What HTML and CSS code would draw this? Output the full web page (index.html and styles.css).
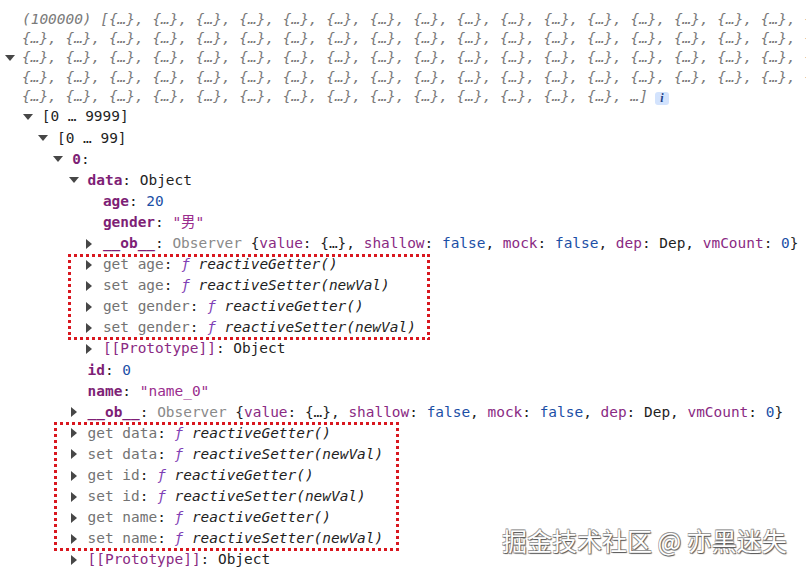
FILE: index.html
```html
<!DOCTYPE html>
<html lang="zh">
<head>
<meta charset="utf-8">
<title>Console</title>
<link rel="stylesheet" href="styles.css">
</head>
<body>
<div class="console">
  <div class="preview-row">
    <span class="tg down"></span>
    <div class="preview">
      <div class="pl">(100000) [{…}, {…}, {…}, {…}, {…}, {…}, {…}, {…}, {…}, {…}, {…}, {…}, {…}, {…}, {…}, {…}, {…}, {…},</div>
      <div class="pl">{…}, {…}, {…}, {…}, {…}, {…}, {…}, {…}, {…}, {…}, {…}, {…}, {…}, {…}, {…}, {…}, {…}, {…}, {…}, {…},</div>
      <div class="pl">{…}, {…}, {…}, {…}, {…}, {…}, {…}, {…}, {…}, {…}, {…}, {…}, {…}, {…}, {…}, {…}, {…}, {…}, {…}, {…},</div>
      <div class="pl">{…}, {…}, {…}, {…}, {…}, {…}, {…}, {…}, {…}, {…}, {…}, {…}, {…}, {…}, {…}, {…}, {…}, {…}, {…}, {…},</div>
      <div class="pl">{…}, {…}, {…}, {…}, {…}, {…}, {…}, {…}, {…}, {…}, {…}, {…}, {…}, {…}, …]<span class="info">i</span></div>
    </div>
  </div>

  <div class="tree">
    <div class="row"><span class="tg down"></span><span class="v">[0 … 9999]</span></div>
    <div class="kids">
      <div class="row"><span class="tg down"></span><span class="v">[0 … 99]</span></div>
      <div class="kids">
        <div class="row"><span class="tg down"></span><span class="v"><b class="k">0</b>:</span></div>
        <div class="kids">
          <div class="row"><span class="tg down"></span><span class="v"><b class="k">data</b>: Object</span></div>
          <div class="kids">
            <div class="row"><span class="tg"></span><span class="v"><b class="k">age</b>: <span class="num">20</span></span></div>
            <div class="row"><span class="tg"></span><span class="v"><b class="k">gender</b>: <span class="str">"男"</span></span></div>
            <div class="row"><span class="tg right"></span><span class="v"><b class="k">__ob__</b>: <span class="cls">Observer</span> {<span class="p">value</span>: {…}, <span class="p">shallow</span>: <span class="num">false</span>, <span class="p">mock</span>: <span class="num">false</span>, <span class="p">dep</span>: Dep, <span class="p">vmCount</span>: <span class="num">0</span>}</span></div>
            <div class="boxed box-a">
              <div class="row"><span class="tg right"></span><span class="v"><span class="acc">get age</span>: <i class="f">ƒ</i> <i>reactiveGetter()</i></span></div>
              <div class="row"><span class="tg right"></span><span class="v"><span class="acc">set age</span>: <i class="f">ƒ</i> <i>reactiveSetter(newVal)</i></span></div>
              <div class="row"><span class="tg right"></span><span class="v"><span class="acc">get gender</span>: <i class="f">ƒ</i> <i>reactiveGetter()</i></span></div>
              <div class="row"><span class="tg right"></span><span class="v"><span class="acc">set gender</span>: <i class="f">ƒ</i> <i>reactiveSetter(newVal)</i></span></div>
            </div>
            <div class="row"><span class="tg right"></span><span class="v"><span class="p">[[Prototype]]</span>: Object</span></div>
          </div>
          <div class="row"><span class="tg"></span><span class="v"><b class="k">id</b>: <span class="num">0</span></span></div>
          <div class="row"><span class="tg"></span><span class="v"><b class="k">name</b>: <span class="str">"name_0"</span></span></div>
          <div class="row"><span class="tg right"></span><span class="v"><b class="k">__ob__</b>: <span class="cls">Observer</span> {<span class="p">value</span>: {…}, <span class="p">shallow</span>: <span class="num">false</span>, <span class="p">mock</span>: <span class="num">false</span>, <span class="p">dep</span>: Dep, <span class="p">vmCount</span>: <span class="num">0</span>}</span></div>
          <div class="boxed box-b">
            <div class="row"><span class="tg right"></span><span class="v"><span class="acc">get data</span>: <i class="f">ƒ</i> <i>reactiveGetter()</i></span></div>
            <div class="row"><span class="tg right"></span><span class="v"><span class="acc">set data</span>: <i class="f">ƒ</i> <i>reactiveSetter(newVal)</i></span></div>
            <div class="row"><span class="tg right"></span><span class="v"><span class="acc">get id</span>: <i class="f">ƒ</i> <i>reactiveGetter()</i></span></div>
            <div class="row"><span class="tg right"></span><span class="v"><span class="acc">set id</span>: <i class="f">ƒ</i> <i>reactiveSetter(newVal)</i></span></div>
            <div class="row"><span class="tg right"></span><span class="v"><span class="acc">get name</span>: <i class="f">ƒ</i> <i>reactiveGetter()</i></span></div>
            <div class="row"><span class="tg right"></span><span class="v"><span class="acc">set name</span>: <i class="f">ƒ</i> <i>reactiveSetter(newVal)</i></span></div>
          </div>
          <div class="row"><span class="tg right"></span><span class="v"><span class="p">[[Prototype]]</span>: Object</span></div>
        </div>
      </div>
    </div>
  </div>
</div>
<div class="watermark">掘金技术社区 @ 亦黑迷失</div>
</body>
</html>
```
FILE: styles.css
```css
html, body {
  margin: 0;
  padding: 0;
  background: #ffffff;
  overflow: hidden;
}
body {
  width: 806px;
  height: 572px;
  position: relative;
  font-family: "DejaVu Sans Mono", "Liberation Mono", "Noto Sans CJK SC", monospace;
  font-size: 14.45px;
  color: #1f1f1f;
}
.console {
  padding-top: 10px;
}
.preview-row {
  display: flex;
  align-items: center;
  padding-left: 5px;
}
.preview-row .tg {
  width: 10px;
  margin-right: 7px;
}
.preview {
  flex: 1;
  overflow: hidden;
}
.pl {
  line-height: 19.2px;
  height: 19.2px;
  white-space: pre;
  font-style: italic;
  color: #7a7a7a;
}
.info {
  display: inline-flex;
  align-items: center;
  justify-content: center;
  width: 14px;
  height: 13px;
  margin-left: 7px;
  border-radius: 3px;
  background: #d3e3fd;
  color: #1d3f86;
  font-family: "Liberation Serif", serif;
  font-weight: bold;
  font-size: 12px;
  vertical-align: -1px;
}
.tree {
  padding-left: 21.7px;
  padding-top: 0.5px;
}
.kids {
  padding-left: 15.3px;
}
.row {
  display: flex;
  align-items: center;
  height: 21.1px;
  line-height: 21.1px;
  white-space: pre;
}
.tg {
  display: flex;
  justify-content: center;
  align-items: center;
  flex: none;
  width: 12px;
  margin-right: 8px;
}
.tg.down::before {
  content: "";
  border-left: 5px solid transparent;
  border-right: 5px solid transparent;
  border-top: 6.5px solid #474747;
}
.tg.right::before {
  content: "";
  border-top: 5px solid transparent;
  border-bottom: 5px solid transparent;
  border-left: 6.5px solid #474747;
}
.k {
  color: #7e1f76;
  font-weight: bold;
}
.p {
  color: #8a2a83;
}
.num {
  color: #1c4fa6;
}
.str {
  color: #9a2d8e;
}
.cls {
  color: #8a8a8a;
}
.acc {
  color: #737373;
}
i {
  font-style: italic;
  color: #1f1f1f;
}
i.f {
  color: #7f3fb5;
}
.boxed {
  position: relative;
}
.boxed::after {
  content: "";
  position: absolute;
  top: 0;
  bottom: -1.5px;
  --dot: #d9171f;
  background:
    repeating-linear-gradient(90deg, var(--dot) 0 3px, transparent 3px 6px) left top / 100% 3px no-repeat,
    repeating-linear-gradient(90deg, var(--dot) 0 3px, transparent 3px 6px) left bottom / 100% 3px no-repeat,
    repeating-linear-gradient(180deg, var(--dot) 0 3px, transparent 3px 6px) left top / 3px 100% no-repeat,
    repeating-linear-gradient(180deg, var(--dot) 0 3px, transparent 3px 6px) right top / 3px 100% no-repeat;
  pointer-events: none;
}
.box-a::after {
  left: -15px;
  width: 362px;
}
.box-b::after {
  top: -1px;
  left: -13.6px;
  width: 345px;
}
.watermark {
  position: absolute;
  left: 502px;
  top: 523px;
  font-family: "Noto Sans CJK SC", "Noto Sans", sans-serif;
  font-size: 25px;
  line-height: 34px;
  color: #ffffff;
  white-space: nowrap;
  text-shadow:
    1px 1px 1px #5a5a5a,
    -0.6px -0.6px 0 #9a9a9a,
    0.6px -0.6px 0 #9a9a9a,
    -0.6px 0.6px 0 #9a9a9a;
}
```
